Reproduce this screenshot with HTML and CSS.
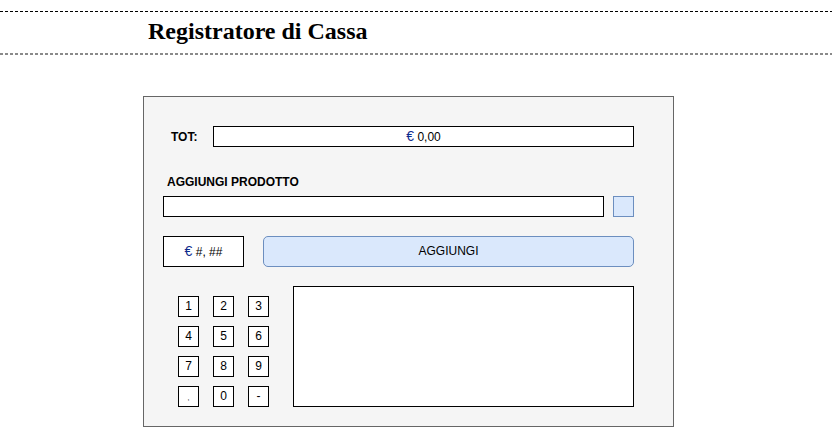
FILE: index.html
```html
<!DOCTYPE html>
<html lang="it">
<head>
<meta charset="utf-8">
<title>Registratore di Cassa</title>
<link rel="stylesheet" href="styles.css">
</head>
<body>
<header class="header">
  <h1 class="title">Registratore di Cassa</h1>
</header>
<main class="panel">
  <div class="row-tot">
    <span class="tot-label">TOT:</span>
    <div class="tot-box"><span class="euro">€</span> 0,00</div>
  </div>
  <div class="add-label">AGGIUNGI PRODOTTO</div>
  <div class="row-input">
    <div class="product-input"></div>
    <div class="square"></div>
  </div>
  <div class="row-actions">
    <div class="price-box"><span class="euro">€</span> #, ##</div>
    <div class="add-btn">AGGIUNGI</div>
  </div>
  <div class="row-bottom">
    <div class="keypad">
      <div class="key">1</div>
      <div class="key">2</div>
      <div class="key">3</div>
      <div class="key">4</div>
      <div class="key">5</div>
      <div class="key">6</div>
      <div class="key">7</div>
      <div class="key">8</div>
      <div class="key">9</div>
      <div class="key key-comma">,</div>
      <div class="key">0</div>
      <div class="key">-</div>
    </div>
    <div class="list-box"></div>
  </div>
</main>
</body>
</html>
```
FILE: styles.css
```css
html, body {
  margin: 0;
  padding: 0;
  background: #ffffff;
}
body {
  font-family: "Liberation Sans", Arial, sans-serif;
  color: #000;
  overflow: hidden;
}
.header {
  margin-top: 11px;
  height: 44px;
  box-sizing: border-box;
  padding: 1px 0 2px 148px;
  background-image:
    repeating-linear-gradient(to right, #000 0 3px, transparent 3px 5px),
    repeating-linear-gradient(to right, #8a8a8a 0 3px, transparent 3px 5px);
  background-size: 100% 1px, 100% 2px;
  background-position: 0 0, 0 100%;
  background-repeat: no-repeat;
}
.title {
  margin: 0;
  font-family: "Liberation Serif", "Times New Roman", serif;
  font-weight: bold;
  font-size: 24px;
  line-height: 38px;
}
.panel {
  margin: 41px 0 0 143px;
  width: 531px;
  height: 331px;
  box-sizing: border-box;
  border: 1px solid #666;
  background: #f5f5f5;
  padding-top: 29px;
}
.row-tot {
  display: flex;
  align-items: center;
  height: 21px;
}
.tot-label {
  box-sizing: border-box;
  width: 69px;
  padding-left: 27px;
  font-size: 12px;
  font-weight: bold;
}
.tot-box {
  box-sizing: border-box;
  width: 421px;
  height: 21px;
  border: 1px solid #000;
  background: #fff;
  font-size: 12px;
  line-height: 19px;
  text-align: center;
}
.euro {
  color: #0d2a8c;
  font-size: 14px;
}
.add-label {
  margin-top: 27px;
  padding-left: 23px;
  font-size: 12px;
  font-weight: bold;
  line-height: 16px;
  height: 16px;
}
.row-input {
  display: flex;
  margin-top: 6px;
  padding-left: 19px;
  gap: 9px;
}
.product-input {
  box-sizing: border-box;
  width: 441px;
  height: 21px;
  border: 1px solid #000;
  background: #fff;
}
.square {
  box-sizing: border-box;
  width: 21px;
  height: 21px;
  border: 1px solid #6c8ebf;
  background: #dae8fc;
}
.row-actions {
  display: flex;
  margin-top: 19px;
  padding-left: 19px;
  gap: 19px;
}
.price-box {
  box-sizing: border-box;
  width: 81px;
  height: 31px;
  border: 1px solid #000;
  background: #fff;
  font-size: 12px;
  line-height: 29px;
  text-align: center;
}
.add-btn {
  box-sizing: border-box;
  width: 371px;
  height: 31px;
  border: 1px solid #6c8ebf;
  border-radius: 5px;
  background: #dae8fc;
  font-size: 12px;
  line-height: 29px;
  text-align: center;
}
.row-bottom {
  display: flex;
  align-items: flex-start;
  margin-top: 19px;
  padding-left: 34px;
  gap: 24px;
}
.keypad {
  display: grid;
  grid-template-columns: repeat(3, 21px);
  grid-auto-rows: 21px;
  column-gap: 14px;
  row-gap: 9px;
  margin-top: 10px;
}
.key {
  box-sizing: border-box;
  border: 1px solid #000;
  background: #fff;
  font-size: 12px;
  line-height: 19px;
  text-align: center;
}
.key-comma {
  font-size: 7px;
  line-height: 21px;
}
.list-box {
  box-sizing: border-box;
  width: 341px;
  height: 121px;
  border: 1px solid #000;
  background: #fff;
}
```
